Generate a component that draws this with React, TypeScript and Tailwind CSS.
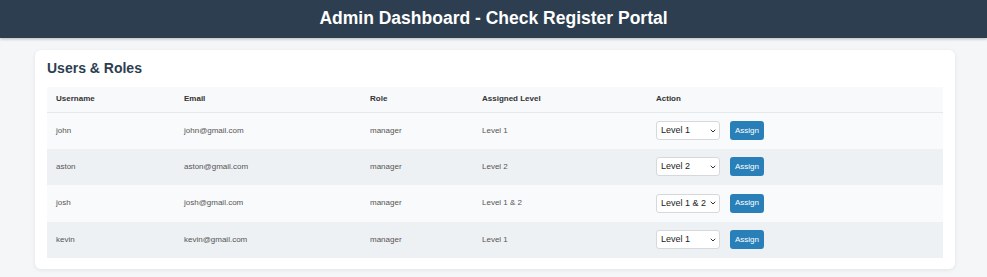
import React, { useState } from 'react';
import { ChevronDown } from 'lucide-react';

interface UserRow {
    username: string;
    email: string;
    role: string;
    level: string;
}

const initialUsers: UserRow[] = [
    { username: 'john', email: 'john@gmail.com', role: 'manager', level: 'Level 1' },
    { username: 'aston', email: 'aston@gmail.com', role: 'manager', level: 'Level 2' },
    { username: 'josh', email: 'josh@gmail.com', role: 'manager', level: 'Level 1 & 2' },
    { username: 'kevin', email: 'kevin@gmail.com', role: 'manager', level: 'Level 1' }
];

const levels = ['Level 1', 'Level 2', 'Level 1 & 2'];

const App: React.FC = () => {
    const [users, setUsers] = useState(initialUsers);
    const [picked, setPicked] = useState<string[]>(initialUsers.map((u) => u.level));

    const assign = (index: number) => {
        setUsers((prev) => prev.map((u, i) => (i === index ? { ...u, level: picked[index] } : u)));
    };

    return (
        <div className="min-h-[277px] bg-[#f4f6f8] font-['Liberation_Sans',Arial,sans-serif]">
            {/* Header */}
            <header className="h-[38px] bg-[#2c3e50] flex items-center justify-center shadow-[0_1px_3px_rgba(0,0,0,0.25)]">
                <h1 className="text-[17.5px] font-bold text-white leading-none">
                    Admin Dashboard - Check Register Portal
                </h1>
            </header>

            <main className="pt-[12px] pl-[35px] pb-[8px]">
                <section className="w-[920px] bg-white rounded-[6px] shadow-[0_1px_4px_rgba(0,0,0,0.08)] px-[12px] pt-[10px] pb-[11px]">
                    <h2 className="text-[14px] font-bold text-[#2c3e50] leading-[17px] mb-[10px]">
                        Users &amp; Roles
                    </h2>

                    <table className="w-full border-collapse text-[8px] text-[#555]">
                        <thead>
                            <tr className="h-[25px] bg-[#f8f9fa] border-b border-[#e6e9ec]">
                                <th className="w-[128px] text-left font-bold text-[#333] pl-[9px]">Username</th>
                                <th className="w-[186px] text-left font-bold text-[#333] pl-[9px]">Email</th>
                                <th className="w-[112px] text-left font-bold text-[#333] pl-[9px]">Role</th>
                                <th className="w-[174px] text-left font-bold text-[#333] pl-[9px]">Assigned Level</th>
                                <th className="text-left font-bold text-[#333] pl-[9px]">Action</th>
                            </tr>
                        </thead>
                        <tbody>
                            {users.map((user, index) => (
                                <tr
                                    key={user.username}
                                    className={`h-[36.5px] ${index % 2 === 0 ? 'bg-[#f9fafb]' : 'bg-[#eef1f4]'}`}
                                >
                                    <td className="pl-[9px]">{user.username}</td>
                                    <td className="pl-[9px]">{user.email}</td>
                                    <td className="pl-[9px]">{user.role}</td>
                                    <td className="pl-[9px]">{user.level}</td>
                                    <td className="pl-[9px]">
                                        <div className="flex items-center gap-[10px]">
                                            <div className="relative w-[64px] h-[19px]">
                                                <select
                                                    value={picked[index]}
                                                    onChange={(e) => {
                                                        const next = [...picked];
                                                        next[index] = e.target.value;
                                                        setPicked(next);
                                                    }}
                                                    className="appearance-none w-full h-full bg-white border border-[#d5d9dd] rounded-[3px] pl-[4px] pr-[12px] text-[9px] text-[#222] outline-none"
                                                >
                                                    {levels.map((l) => (
                                                        <option key={l} value={l}>
                                                            {l}
                                                        </option>
                                                    ))}
                                                </select>
                                                <ChevronDown
                                                    className="absolute right-[3px] top-1/2 -translate-y-1/2 w-[8px] h-[8px] text-[#333] pointer-events-none"
                                                    strokeWidth={3}
                                                />
                                            </div>
                                            <button
                                                type="button"
                                                onClick={() => assign(index)}
                                                className="w-[34px] h-[19px] rounded-[3px] bg-[#2980b9] text-white text-[8px] leading-none"
                                            >
                                                Assign
                                            </button>
                                        </div>
                                    </td>
                                </tr>
                            ))}
                        </tbody>
                    </table>
                </section>
            </main>
        </div>
    );
};

export default App;
